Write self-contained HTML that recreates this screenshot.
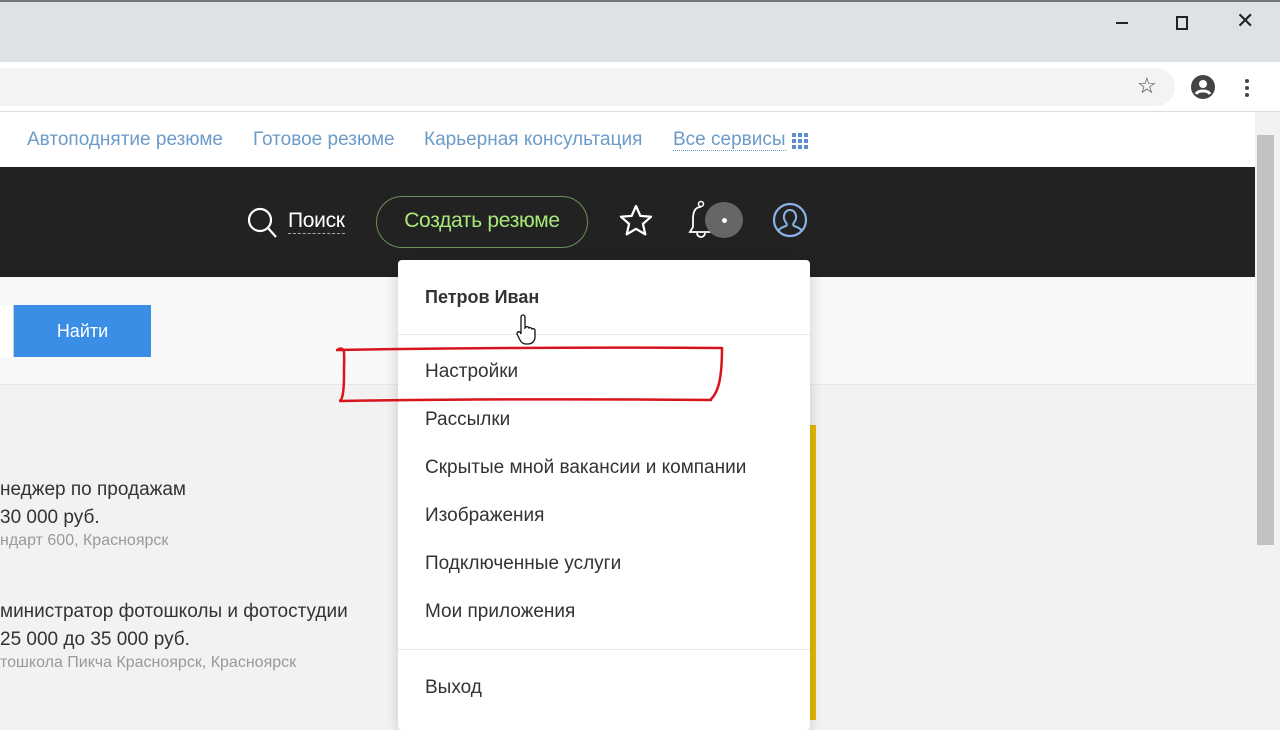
<!DOCTYPE html>
<html><head><meta charset="utf-8"><style>
*{margin:0;padding:0;box-sizing:border-box}
body{width:1280px;height:720px;overflow:hidden;position:relative;font-family:"Liberation Sans",sans-serif;background:#f3f2f1}
.a{position:absolute}
.m{font-size:19px;color:#333}
.l{font-size:19px;color:#6b9bc9;top:129px}
</style></head><body>
<div class="a" style="left:0;top:0;width:1280px;height:62px;background:#dee1e6;border-top:2px solid #777"></div>
<div class="a" style="left:1116px;top:22px;width:12px;height:2px;background:#222"></div>
<div class="a" style="left:1176px;top:16px;width:12px;height:14px;border:2px solid #222"></div>
<div class="a" style="left:1236px;top:8px;font-size:22px;color:#222">✕</div>
<div class="a" style="left:0;top:62px;width:1280px;height:50px;background:#fff;border-bottom:1px solid #ddd"></div>
<div class="a" style="left:0;top:68px;width:1175px;height:38px;background:#f1f3f4;border-radius:0 19px 19px 0"></div>
<div class="a" style="left:1137px;top:73px;font-size:22px;color:#444">☆</div>
<svg class="a" style="left:1190px;top:74px" width="26" height="26" viewBox="0 0 26 26"><circle cx="13" cy="13" r="12" fill="#444"/><circle cx="13" cy="10" r="4" fill="#fff"/><path d="M6 20c2-4 12-4 14 0" stroke="#fff" stroke-width="3" fill="none"/></svg>
<div class="a" style="left:1245px;top:79px;width:4px;height:4px;background:#444;border-radius:2px;box-shadow:0 7px #444,0 14px #444"></div>
<div class="a" style="left:0;top:112px;width:1255px;height:55px;background:#fff"></div>
<div class="a l" style="left:27px">Автоподнятие резюме</div>
<div class="a l" style="left:253px">Готовое резюме</div>
<div class="a l" style="left:424px">Карьерная консультация</div>
<div class="a l" style="left:673px;border-bottom:1px dotted #6b9bc9;line-height:21px">Все сервисы</div>
<div class="a" style="left:792px;top:133px;width:4px;height:4px;background:#5b8fd0;box-shadow:6px 0 #5b8fd0,12px 0 #5b8fd0,0 6px #5b8fd0,6px 6px #5b8fd0,12px 6px #5b8fd0,0 12px #5b8fd0,6px 12px #5b8fd0,12px 12px #5b8fd0"></div>
<div class="a" style="left:0;top:167px;width:1255px;height:110px;background:#222"></div>
<svg class="a" style="left:246px;top:206px" width="32" height="32" viewBox="0 0 32 32"><circle cx="14" cy="14" r="11" stroke="#fff" stroke-width="2.2" fill="none"/><path d="M22 22l8 9" stroke="#fff" stroke-width="2.2"/></svg>
<div class="a" style="left:288px;top:209px;font-size:21px;color:#fff;border-bottom:1px dashed #aaa;line-height:24px;letter-spacing:-0.3px">Поиск</div>
<div class="a" style="left:376px;top:196px;width:212px;height:52px;border:1.5px solid #6a8f5a;border-radius:26px;color:#a8e87a;font-size:21px;text-align:center;line-height:48px;letter-spacing:-0.3px">Создать резюме</div>
<svg class="a" style="left:617px;top:203px" width="38" height="36" viewBox="0 0 24 24"><path d="M12 2l2.9 6.6 7.1.6-5.4 4.7 1.6 7-6.2-3.7-6.2 3.7 1.6-7L2 9.2l7.1-.6z" stroke="#fff" stroke-width="1.5" fill="none" stroke-linejoin="round"/></svg>
<svg class="a" style="left:688px;top:199px" width="26" height="42" viewBox="0 0 26 42"><circle cx="13" cy="5" r="2.5" stroke="#fff" stroke-width="1.5" fill="none"/><path d="M13 8c-6 0-8 5-8 12v8l-3 5h22" stroke="#fff" stroke-width="1.8" fill="none"/><path d="M9 34a4 4 0 0 0 8 0" stroke="#fff" stroke-width="1.8" fill="none"/></svg>
<div class="a" style="left:705px;top:202px;width:38px;height:36px;border-radius:50%;background:#666"></div>
<div class="a" style="left:722px;top:218px;width:5px;height:5px;border-radius:50%;background:#fff"></div>
<svg class="a" style="left:770px;top:200px" width="40" height="40" viewBox="0 0 40 40"><circle cx="20" cy="20" r="16" stroke="#8ab4e8" stroke-width="2.2" fill="none"/><path d="M20 10a6 7 0 0 0-5 11c1 2 3 3 1 5-3 1-6 2-8 5M20 10a6 7 0 0 1 5 11c-1 2-3 3-1 5 3 1 6 2 8 5" stroke="#8ab4e8" stroke-width="2" fill="none"/></svg>
<div class="a" style="left:0;top:277px;width:1255px;height:108px;background:#f8f8f8;border-bottom:1px solid #e6e6e6"></div>
<div class="a" style="left:0;top:305px;width:14px;height:52px;background:#fff;border-right:1px solid #ccc"></div>
<div class="a" style="left:14px;top:305px;width:137px;height:52px;background:#3a8ee6;color:#fff;font-size:18px;text-align:center;line-height:52px">Найти</div>
<div class="a" style="left:0;top:476px;font-size:19px;color:#333;line-height:28px">неджер по продажам<br>30 000 руб.</div>
<div class="a" style="left:0;top:532px;font-size:16px;color:#999">ндарт 600, Красноярск</div>
<div class="a" style="left:0;top:598px;font-size:19px;color:#333;line-height:28px">министратор фотошколы и фотостудии<br>25 000 до 35 000 руб.</div>
<div class="a" style="left:0;top:654px;font-size:16px;color:#999">тошкола Пикча Красноярск, Красноярск</div>
<div class="a" style="left:810px;top:425px;width:6px;height:295px;background:#e4b800"></div>
<div class="a" style="left:398px;top:260px;width:412px;height:470px;background:#fff;border-radius:4px;box-shadow:0 2px 14px rgba(0,0,0,.18)"></div>
<div class="a" style="left:425px;top:287px;font-size:18px;font-weight:bold;color:#333">Петров Иван</div>
<div class="a" style="left:398px;top:334px;width:412px;height:1px;background:#e8e8e8"></div>
<div class="a m" style="left:425px;top:361px">Настройки</div>
<div class="a m" style="left:425px;top:409px">Рассылки</div>
<div class="a m" style="left:425px;top:457px">Скрытые мной вакансии и компании</div>
<div class="a m" style="left:425px;top:505px">Изображения</div>
<div class="a m" style="left:425px;top:553px">Подключенные услуги</div>
<div class="a m" style="left:425px;top:601px">Мои приложения</div>
<div class="a" style="left:398px;top:649px;width:412px;height:1px;background:#e8e8e8"></div>
<div class="a m" style="left:425px;top:677px">Выход</div>
<svg class="a" style="left:0;top:0" width="1280" height="720"><path d="M338 349c8-2 6 2 6 25 0 20-2 27-5 27 M336 350c120-2 250-3 386-2 M722 347c0 25-2 45-12 53 M340 401c130-2 260-2 372-1" stroke="#d8141c" stroke-width="2.5" fill="none"/></svg>
<svg class="a" style="left:515px;top:314px" width="24" height="32" viewBox="0 0 24 32"><path d="M6 3a2 2 0 0 1 4 0v11l1-1a2 2 0 0 1 3 1 2 2 0 0 1 3 1 2 2 0 0 1 3 1v7c0 4-3 7-7 7h-2c-3 0-5-2-6-4l-3-6a2 2 0 0 1 3-2l1 2z" fill="#fff" stroke="#111" stroke-width="1.3"/></svg>
<div class="a" style="left:1255px;top:112px;width:25px;height:608px;background:#f1f1f1"></div>
<div class="a" style="left:1257px;top:135px;width:17px;height:410px;background:#c1c1c1"></div>
</body></html>
